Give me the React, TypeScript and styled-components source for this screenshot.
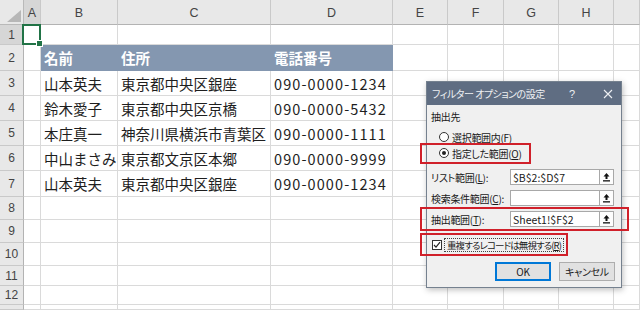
import React from 'react';
import styled, { createGlobalStyle } from 'styled-components';

const GlobalStyle = createGlobalStyle`
  html, body { margin: 0; padding: 0; background: #fff; }
  body { font-family: "Noto Sans CJK JP", "Noto Sans", sans-serif; overflow: hidden; }
  * { box-sizing: border-box; }
`;

const Page = styled.div`
  position: relative;
  width: 640px;
  height: 310px;
  overflow: hidden;
`;

const Sheet = styled.div`
  display: grid;
  grid-template-columns: 24px 17px 77px 153px 122px 55px 56px 55px 55px 1fr;
  grid-template-rows: 25px 20px 26px 25px 25px 25px 25px 26px 23px 23px 23px 20px 19px 1fr;
  width: 640px;
  height: 310px;
`;

const Corner = styled.div`
  position: relative;
  background: #e8e8e8;
  border-right: 1px solid #b9b9b9;
  border-bottom: 1px solid #b9b9b9;
  svg { position: absolute; right: 2px; bottom: 2px; }
`;

const ColHeader = styled.div<{ $active?: boolean }>`
  background: ${(p) => (p.$active ? '#d6d6d6' : '#e8e8e8')};
  border-right: 1px solid #c9c9c9;
  border-bottom: 1px solid #b3b3b3;
  display: flex;
  align-items: center;
  justify-content: center;
  font-family: "Liberation Sans", Arial, sans-serif;
  font-size: 12.5px;
  color: #444;
  padding-top: 2px;
`;

const RowHeader = styled.div<{ $active?: boolean }>`
  background: ${(p) => (p.$active ? '#d6d6d6' : '#e8e8e8')};
  border-right: 1px solid #b3b3b3;
  border-bottom: 1px solid #c9c9c9;
  display: flex;
  align-items: center;
  justify-content: center;
  font-family: "Liberation Sans", Arial, sans-serif;
  font-size: 12px;
  color: #444;
`;

const Cell = styled.div<{ $head?: boolean; $selected?: boolean; $phone?: boolean }>`
  position: relative;
  display: flex;
  align-items: center;
  padding-left: 3px;
  white-space: nowrap;
  font-size: 14.5px;
  color: #1e1e1e;
  border-right: 1px solid ${(p) => (p.$head ? '#8497b0' : '#dadada')};
  border-bottom: 1px solid ${(p) => (p.$head ? '#8497b0' : '#dadada')};
  background: ${(p) => (p.$head ? '#8497b0' : 'transparent')};
  ${(p) => p.$head && 'color: #fff; font-weight: 700;'}
  ${(p) => p.$phone && 'letter-spacing: 1.1px;'}
  ${(p) =>
    p.$selected &&
    `
    &::after {
      content: '';
      position: absolute;
      top: -1px; left: -2px; right: -1px; bottom: -1px;
      border: 2px solid #217346;
    }
    &::before {
      content: '';
      position: absolute;
      right: -3px; bottom: -3px;
      width: 5px; height: 5px;
      background: #217346;
      border: 1px solid #fff;
      z-index: 2;
    }
  `}
`;

/* ---------- Dialog ---------- */

const Dialog = styled.div`
  position: absolute;
  left: 426px;
  top: 81px;
  width: 196px;
  height: 207px;
  background: #f0f0f0;
  border: 1px solid #75818f;
  box-shadow: 1px 2px 6px rgba(0, 0, 0, 0.25);
  display: flex;
  flex-direction: column;
  font-size: 10px;
  letter-spacing: -0.3px;
  color: #1a1a1a;
  font-feature-settings: "palt";
`;

const TitleBar = styled.div`
  height: 23px;
  background: #5f6d82;
  display: flex;
  align-items: center;
  padding-left: 5px;
  color: #eef0f3;
`;

const TitleText = styled.div`
  flex: 1;
  font-size: 10px;
  letter-spacing: -0.5px;
`;

const TitleButton = styled.div<{ $w: number }>`
  width: ${(p) => p.$w}px;
  display: flex;
  align-items: center;
  justify-content: center;
  font-family: "Liberation Sans", Arial, sans-serif;
  font-size: 11px;
`;

const Body = styled.div`
  flex: 1;
  display: flex;
  flex-direction: column;
  padding: 4px 7px 6px 4px;
`;

const GroupLabel = styled.div<{ $mt: number }>`
  margin-top: ${(p) => p.$mt}px;
  height: 16px;
  line-height: 16px;
`;

const RadioRow = styled.div<{ $mt: number }>`
  position: relative;
  margin-top: ${(p) => p.$mt}px;
  height: 16px;
  display: flex;
  align-items: center;
  gap: 3px;
  padding-left: 8px;
`;

const Radio = styled.span<{ $on?: boolean }>`
  width: 10px;
  height: 10px;
  border-radius: 50%;
  border: 1px solid #333;
  background: #fff;
  display: flex;
  align-items: center;
  justify-content: center;
  &::after {
    content: '';
    width: 4px;
    height: 4px;
    border-radius: 50%;
    background: ${(p) => (p.$on ? '#222' : 'transparent')};
  }
`;

const FieldRow = styled.div<{ $mt: number }>`
  position: relative;
  margin-top: ${(p) => p.$mt}px;
  height: 16px;
  display: grid;
  grid-template-columns: 79px 1fr 15px;
  align-items: center;
`;

const FieldInput = styled.div`
  height: 16px;
  background: #fff;
  border: 1px solid #a8a8a8;
  border-right: none;
  padding-left: 2px;
  display: flex;
  align-items: center;
  font-size: 10.5px;
  letter-spacing: 0;
`;

const RefButton = styled.div`
  height: 16px;
  background: #fdfdfd;
  border: 1px solid #a8a8a8;
  display: flex;
  align-items: center;
  justify-content: center;
`;

const CheckRow = styled.div<{ $mt: number }>`
  position: relative;
  margin-top: ${(p) => p.$mt}px;
  height: 16px;
  display: flex;
  align-items: center;
  gap: 2px;
  padding-left: 1px;
`;

const CheckBox = styled.span`
  width: 10px;
  height: 10px;
  border: 1px solid #333;
  background: #fff;
  display: flex;
  align-items: center;
  justify-content: center;
`;

const FocusLabel = styled.span`
  border: 1px dotted #444;
  padding: 0 2px;
  line-height: 12px;
  font-size: 9.5px;
  letter-spacing: -0.9px;
`;

const ButtonRow = styled.div<{ $mt: number }>`
  margin-top: ${(p) => p.$mt}px;
  display: flex;
  justify-content: flex-end;
  gap: 8px;
  margin-right: -1px;
`;

const DlgButton = styled.div<{ $primary?: boolean }>`
  width: 56px;
  height: 19px;
  background: #e1e1e1;
  border: 1px solid ${(p) => (p.$primary ? '#0078d7' : '#adadad')};
  ${(p) => p.$primary && 'box-shadow: inset 0 0 0 1px #0078d7;'}
  display: flex;
  align-items: center;
  justify-content: center;
  font-size: 10px;
`;

const Callout = styled.span<{ $l: number; $r: number; $t: number; $b: number }>`
  position: absolute;
  left: ${(p) => p.$l}px;
  right: ${(p) => p.$r}px;
  top: ${(p) => p.$t}px;
  bottom: ${(p) => p.$b}px;
  border: 2px solid #d0202a;
  pointer-events: none;
  z-index: 3;
`;

const U = styled.span`
  text-decoration: underline;
  text-underline-offset: 1px;
`;

const RefIcon = () => (
  <svg width="9" height="10" viewBox="0 0 9 10">
    <path d="M4.5 1 L1.5 4.5 H3.5 V7 H5.5 V4.5 H7.5 Z" fill="#111" />
    <rect x="1" y="8.2" width="7" height="1.3" fill="#111" />
  </svg>
);

const CloseIcon = () => (
  <svg width="10" height="10" viewBox="0 0 10 10">
    <path d="M1 1 L9 9 M9 1 L1 9" stroke="#eef0f3" strokeWidth="1.1" />
  </svg>
);

const CheckMark = () => (
  <svg width="8" height="8" viewBox="0 0 8 8">
    <path d="M1 4 L3 6.2 L7 1.2" stroke="#222" strokeWidth="1.2" fill="none" />
  </svg>
);

const columns = ['A', 'B', 'C', 'D', 'E', 'F', 'G', 'H', ''];

const tableRows: [string, string, string][] = [
  ['山本英夫', '東京都中央区銀座', '090-0000-1234'],
  ['鈴木愛子', '東京都中央区京橋', '090-0000-5432'],
  ['本庄真一', '神奈川県横浜市青葉区', '090-0000-1111'],
  ['中山まさみ', '東京都文京区本郷', '090-0000-9999'],
  ['山本英夫', '東京都中央区銀座', '090-0000-1234'],
];

function rowCells(r: number) {
  const cells: React.ReactNode[] = [];
  for (let c = 0; c < columns.length; c++) {
    let content: React.ReactNode = null;
    let head = false;
    let phone = false;
    if (r === 2 && c >= 1 && c <= 3) {
      head = true;
      content = ['名前', '住所', '電話番号'][c - 1];
    } else if (r >= 3 && r <= 7 && c >= 1 && c <= 3) {
      content = tableRows[r - 3][c - 1];
      phone = c === 3;
    }
    cells.push(
      <Cell key={c} $head={head} $phone={phone} $selected={r === 1 && c === 0}>
        {content}
      </Cell>
    );
  }
  return cells;
}

export default function App() {
  const rows = Array.from({ length: 13 }, (_, i) => i + 1);
  return (
    <Page>
      <GlobalStyle />
      <Sheet>
        <Corner>
          <svg width="14" height="12" viewBox="0 0 14 12">
            <path d="M14 0 L14 12 L0 12 Z" fill="#b7b7b7" />
          </svg>
        </Corner>
        {columns.map((c, i) => (
          <ColHeader key={i} $active={i === 0}>
            {c}
          </ColHeader>
        ))}
        {rows.map((r) => (
          <React.Fragment key={r}>
            <RowHeader $active={r === 1}>{r <= 12 ? r : null}</RowHeader>
            {rowCells(r)}
          </React.Fragment>
        ))}
      </Sheet>

      <Dialog>
        <TitleBar>
          <TitleText>フィルター オプションの設定</TitleText>
          <TitleButton $w={26}>?</TitleButton>
          <TitleButton $w={10} />
          <TitleButton $w={26}>
            <CloseIcon />
          </TitleButton>
        </TitleBar>
        <Body>
          <GroupLabel $mt={0}>抽出先</GroupLabel>
          <RadioRow $mt={4}>
            <Radio />
            <span>
              選択範囲内(<U>F</U>)
            </span>
          </RadioRow>
          <RadioRow $mt={0}>
            <Radio $on />
            <span>
              指定した範囲(<U>O</U>)
            </span>
            <Callout $l={-11} $r={83} $t={-2} $b={-3} />
          </RadioRow>
          <FieldRow $mt={8}>
            <span>
              リスト範囲(<U>L</U>):
            </span>
            <FieldInput>$B$2:$D$7</FieldInput>
            <RefButton>
              <RefIcon />
            </RefButton>
          </FieldRow>
          <FieldRow $mt={5}>
            <span>
              検索条件範囲(<U>C</U>):
            </span>
            <FieldInput />
            <RefButton>
              <RefIcon />
            </RefButton>
          </FieldRow>
          <FieldRow $mt={5}>
            <span>
              抽出範囲(<U>T</U>):
            </span>
            <FieldInput>Sheet1!$F$2</FieldInput>
            <RefButton>
              <RefIcon />
            </RefButton>
            <Callout $l={-11} $r={-15} $t={-4} $b={-4} />
          </FieldRow>
          <CheckRow $mt={10}>
            <CheckBox>
              <CheckMark />
            </CheckBox>
            <FocusLabel>
              重複するレコードは無視する(<U>R</U>)
            </FocusLabel>
            <Callout $l={-11} $r={46} $t={-4} $b={-3} />
          </CheckRow>
          <ButtonRow $mt={9}>
            <DlgButton $primary>OK</DlgButton>
            <DlgButton>キャンセル</DlgButton>
          </ButtonRow>
        </Body>
      </Dialog>
    </Page>
  );
}
